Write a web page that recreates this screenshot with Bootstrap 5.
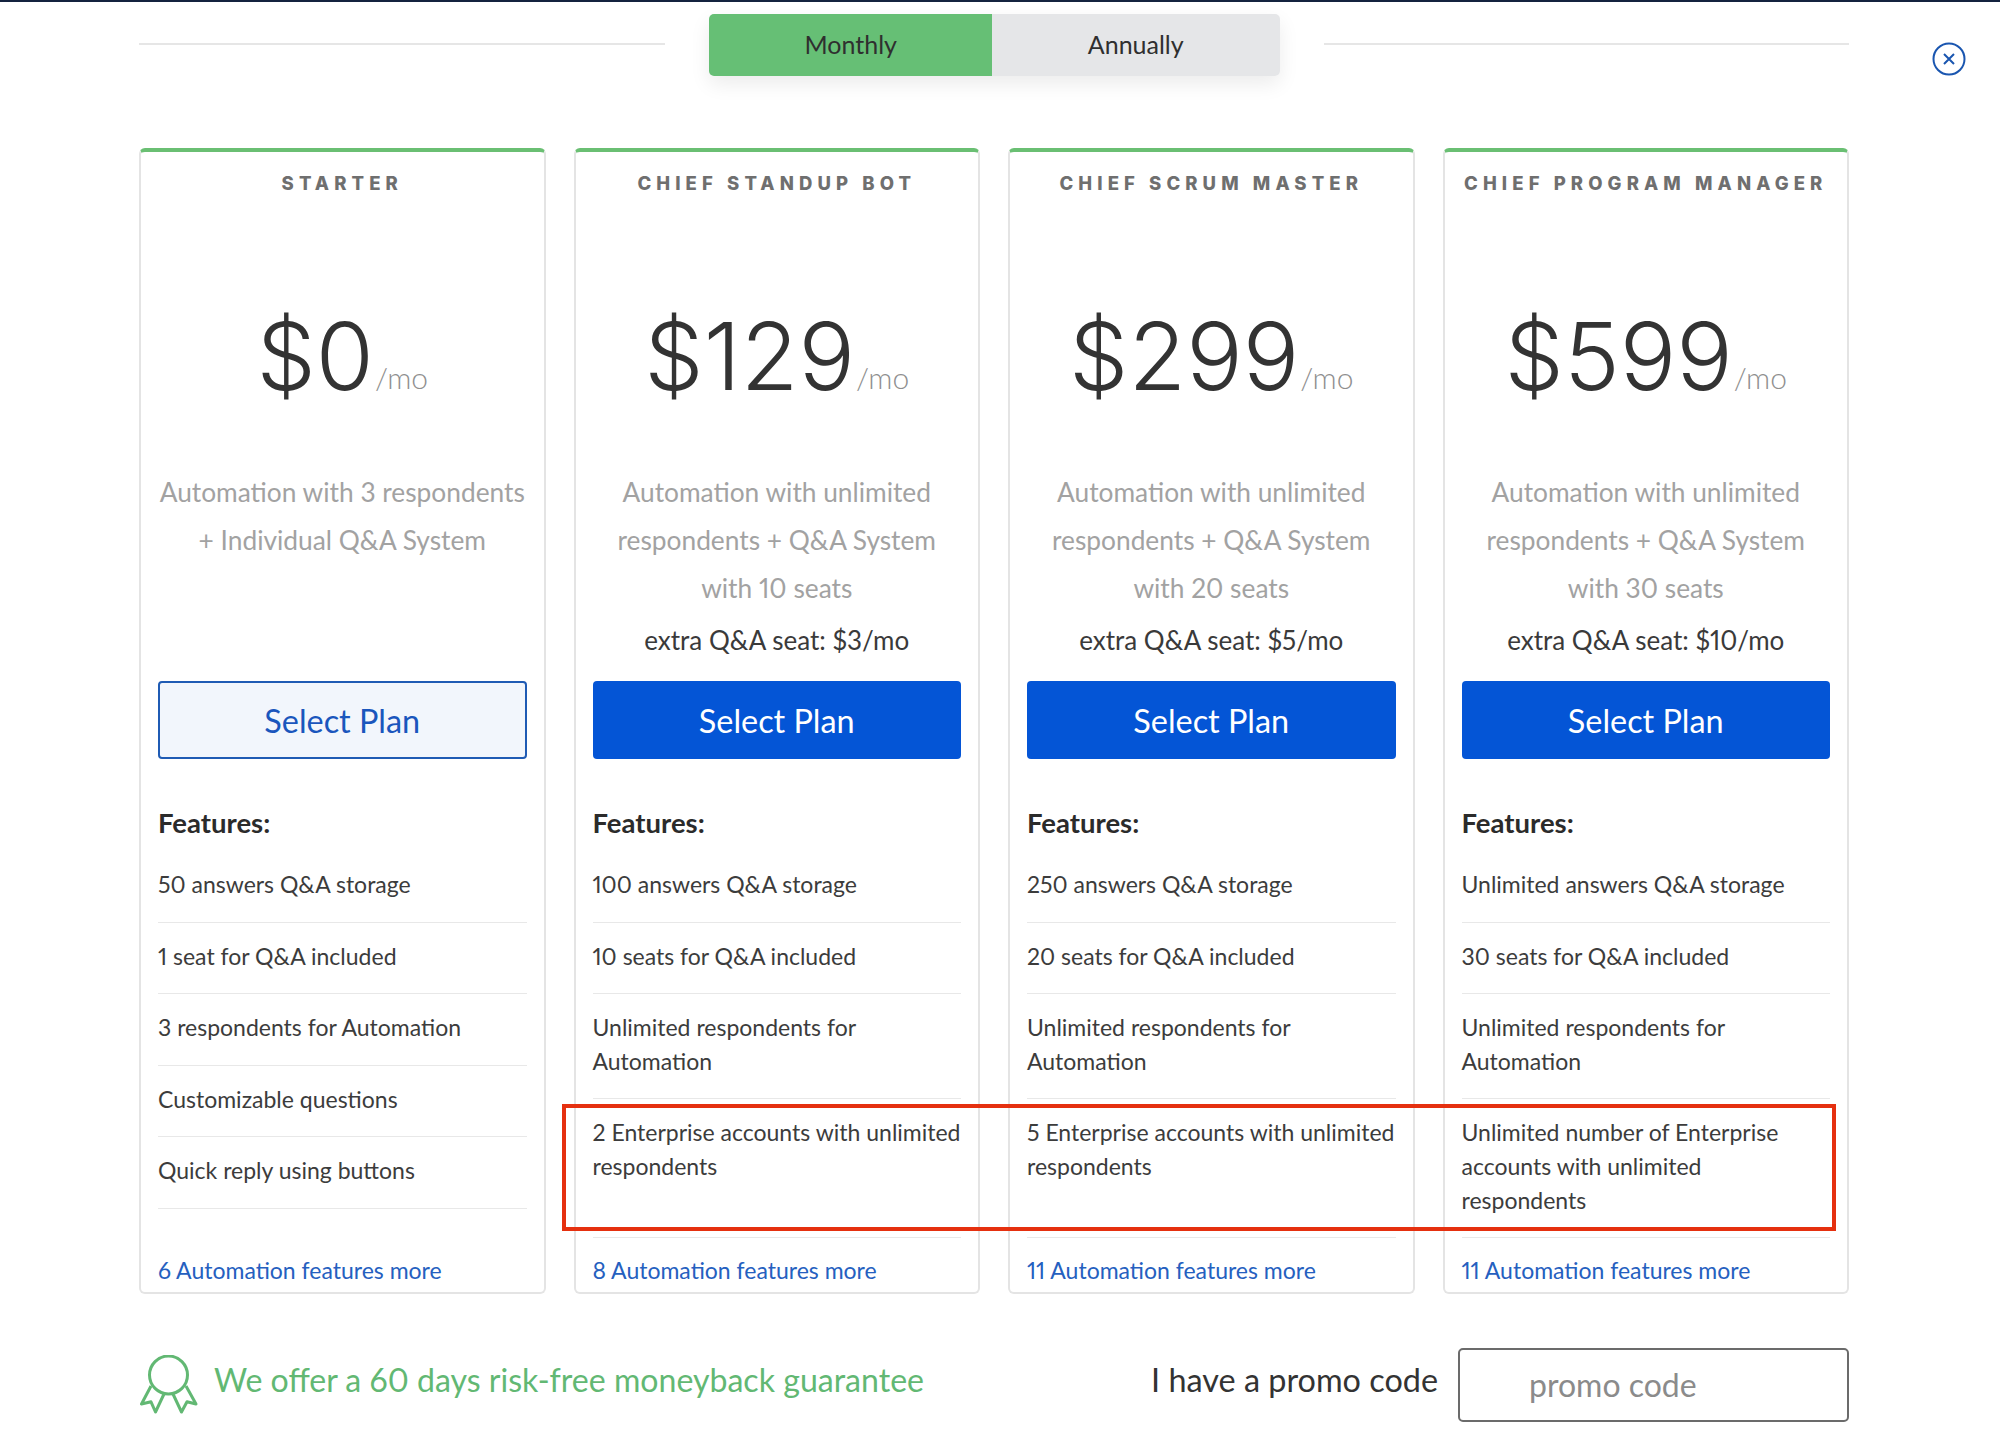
<!DOCTYPE html>
<html lang="en">
<head>
<meta charset="utf-8">
<title>Pricing</title>
<link href="https://cdn.jsdelivr.net/npm/bootstrap@5.3.0/dist/css/bootstrap.min.css" rel="stylesheet">
<style>
body{font-family:"Lato","Liberation Sans",sans-serif;color:#333;background:#fff;border-top:2px solid #14233f;min-height:1451px;overflow:hidden;font-variant-numeric:proportional-nums}
.page-wrap{padding:12px 0 0 139px}
.main-col{width:1710px}
.close-col{width:151px;padding-top:28px;padding-left:83px}
.toggle-line{height:2px;background:#e6e6e6;flex:1;margin-top:-2px}
.toggle-group{width:571px;height:62px;margin:0 44px;box-shadow:0 8px 20px rgba(0,0,0,.08);border-radius:5px}
.toggle-on,.toggle-off{font-size:25px;line-height:1;border:0;color:#2f2f2f;padding:0 0 2px;border-radius:5px}
.toggle-on{background:#66bf75;width:284px}
.toggle-off{background:#e5e6e8;width:287px}
.toggle-on:hover{background:#66bf75}
.toggle-off:hover{background:#e5e6e8}
.plan-row{--bs-gutter-x:28px;margin-top:72px;position:relative}
.plan-card{border:2px solid #e4e4e4;border-top:4px solid #6abf73;border-radius:6px;height:1146px;padding:0 17px 5px;display:flex;flex-direction:column}
.plan-name{height:60px;line-height:62px;font-family:"Inter","Liberation Sans",sans-serif;font-size:18.5px;font-weight:800;letter-spacing:5.1px;color:#6f6f6f;text-align:center;text-transform:uppercase;white-space:nowrap}
.plan-price{height:256px;padding-top:77px;text-align:center;font-family:"Inter","Liberation Sans",sans-serif;font-weight:280;font-size:94px;line-height:134px;color:#333;white-space:nowrap}
.plan-unit{font-family:"Lato","Liberation Sans",sans-serif;font-size:30px;font-weight:300;color:#8f8f8f;margin-left:1px;vertical-align:1px}
.plan-desc{height:213px;text-align:center;font-size:26.3px;line-height:48.2px;color:#a2a2a2}
.plan-extra{color:#3a3a3a;font-size:26px;line-height:34px;margin-top:10px}
.plan-btn{height:78px;font-size:32.4px;border-radius:4px;line-height:1;background:#0455d6;border:0;color:#fff;width:100%;padding-top:8px}
.plan-btn:hover{background:#0455d6;color:#fff}
.plan-btn-ghost,.plan-btn-ghost:hover{background:#f2f6fc;border:2px solid #1f5bb4;color:#1a56bd}
.feat-head{font-size:27.5px;font-weight:700;line-height:34px;margin:47px 0 11px;color:#2b2b2b}
.plan-card>.feat-list{border:0}
.feat-list>.feat-item,.feat-list>.feat-item:last-child{font-size:23px;line-height:33.6px;padding:17px 0 20px;border-width:0 0 1px;border-style:solid;border-color:#e8e8e8;color:#3c3c3c;background:transparent}
.feat-list>.feat-tall,.feat-list>.feat-tall:last-child{min-height:139px}
.feat-more{margin-top:auto;font-size:23px;line-height:34px;color:#2560bf;text-decoration:none}
.red-box{position:absolute;left:437px;top:956px;width:1274px;height:127px;border:4px solid #e5300f;pointer-events:none}
.foot-row{margin-top:54px}
.foot-icon{margin-left:1px}
.guarantee{font-size:32.1px;color:#62b873;margin-left:14px;line-height:1;padding-bottom:10px}
.promo-label{font-size:32.4px;color:#333;margin-right:20px;line-height:1;padding-bottom:10px}
.promo-input{width:391px;height:74px;border:2px solid #6b6b6b;border-radius:5px;font-size:32px;padding:0 0 2px 69px;color:#333}
.promo-input::placeholder{color:#8b8b8b}
</style>
</head>
<body>
<div class="page-wrap d-flex">
  <div class="main-col">
    <div class="d-flex align-items-center">
      <div class="toggle-line"></div>
      <div class="btn-group toggle-group" role="group">
        <button type="button" class="btn toggle-on">Monthly</button>
        <button type="button" class="btn toggle-off">Annually</button>
      </div>
      <div class="toggle-line"></div>
    </div>

    <div class="row row-cols-4 plan-row">
      <div class="col">
        <div class="card plan-card">
          <div class="plan-name">Starter</div>
          <div class="plan-price">$0<span class="plan-unit">/mo</span></div>
          <div class="plan-desc">Automation with 3 respondents + Individual Q&amp;A System</div>
          <button type="button" class="btn plan-btn plan-btn-ghost">Select Plan</button>
          <div class="feat-head">Features:</div>
          <ul class="list-group list-group-flush feat-list">
            <li class="list-group-item feat-item">50 answers Q&amp;A storage</li>
            <li class="list-group-item feat-item">1 seat for Q&amp;A included</li>
            <li class="list-group-item feat-item">3 respondents for Automation</li>
            <li class="list-group-item feat-item">Customizable questions</li>
            <li class="list-group-item feat-item">Quick reply using buttons</li>
          </ul>
          <a href="#" class="feat-more">6 Automation features more</a>
        </div>
      </div>
      <div class="col">
        <div class="card plan-card">
          <div class="plan-name">Chief Standup Bot</div>
          <div class="plan-price">$129<span class="plan-unit">/mo</span></div>
          <div class="plan-desc">Automation with unlimited respondents + Q&amp;A System with 10 seats<div class="plan-extra">extra Q&amp;A seat: $3/mo</div></div>
          <button type="button" class="btn plan-btn">Select Plan</button>
          <div class="feat-head">Features:</div>
          <ul class="list-group list-group-flush feat-list">
            <li class="list-group-item feat-item">100 answers Q&amp;A storage</li>
            <li class="list-group-item feat-item">10 seats for Q&amp;A included</li>
            <li class="list-group-item feat-item">Unlimited respondents for Automation</li>
            <li class="list-group-item feat-item feat-tall">2 Enterprise accounts with unlimited respondents</li>
          </ul>
          <a href="#" class="feat-more">8 Automation features more</a>
        </div>
      </div>
      <div class="col">
        <div class="card plan-card">
          <div class="plan-name">Chief Scrum Master</div>
          <div class="plan-price">$299<span class="plan-unit">/mo</span></div>
          <div class="plan-desc">Automation with unlimited respondents + Q&amp;A System with 20 seats<div class="plan-extra">extra Q&amp;A seat: $5/mo</div></div>
          <button type="button" class="btn plan-btn">Select Plan</button>
          <div class="feat-head">Features:</div>
          <ul class="list-group list-group-flush feat-list">
            <li class="list-group-item feat-item">250 answers Q&amp;A storage</li>
            <li class="list-group-item feat-item">20 seats for Q&amp;A included</li>
            <li class="list-group-item feat-item">Unlimited respondents for Automation</li>
            <li class="list-group-item feat-item feat-tall">5 Enterprise accounts with unlimited respondents</li>
          </ul>
          <a href="#" class="feat-more">11 Automation features more</a>
        </div>
      </div>
      <div class="col">
        <div class="card plan-card">
          <div class="plan-name">Chief Program Manager</div>
          <div class="plan-price">$599<span class="plan-unit">/mo</span></div>
          <div class="plan-desc">Automation with unlimited respondents + Q&amp;A System with 30 seats<div class="plan-extra">extra Q&amp;A seat: $10/mo</div></div>
          <button type="button" class="btn plan-btn">Select Plan</button>
          <div class="feat-head">Features:</div>
          <ul class="list-group list-group-flush feat-list">
            <li class="list-group-item feat-item">Unlimited answers Q&amp;A storage</li>
            <li class="list-group-item feat-item">30 seats for Q&amp;A included</li>
            <li class="list-group-item feat-item">Unlimited respondents for Automation</li>
            <li class="list-group-item feat-item feat-tall">Unlimited number of Enterprise accounts with unlimited respondents</li>
          </ul>
          <a href="#" class="feat-more">11 Automation features more</a>
        </div>
      </div>
      <div class="red-box"></div>
    </div>

    <div class="d-flex align-items-center foot-row">
      <svg class="foot-icon" width="60" height="60" viewBox="0 0 60 60" fill="none" stroke="#62b873" stroke-width="3" stroke-linejoin="round" aria-hidden="true">
        <circle cx="28.5" cy="20" r="19"/>
        <path d="M11 31 1.5 49 11 46.8 15.5 57 24 39"/>
        <path d="M46 31 56 49 47 46.8 41.5 57 33 39"/>
      </svg>
      <span class="guarantee">We offer a 60 days risk-free moneyback guarantee</span>
      <span class="promo-label ms-auto">I have a promo code</span>
      <input type="text" class="form-control promo-input" placeholder="promo code">
    </div>
  </div>
  <div class="close-col">
    <svg width="34" height="34" viewBox="0 0 34 34" fill="none" stroke="#1a56b0" stroke-width="2" aria-hidden="true">
      <circle cx="17" cy="17" r="15.5"/>
      <path d="M12 12 22 22M22 12 12 22"/>
    </svg>
  </div>
</div>
<script src="https://cdn.jsdelivr.net/npm/bootstrap@5.3.0/dist/js/bootstrap.bundle.min.js"></script>
</body>
</html>
